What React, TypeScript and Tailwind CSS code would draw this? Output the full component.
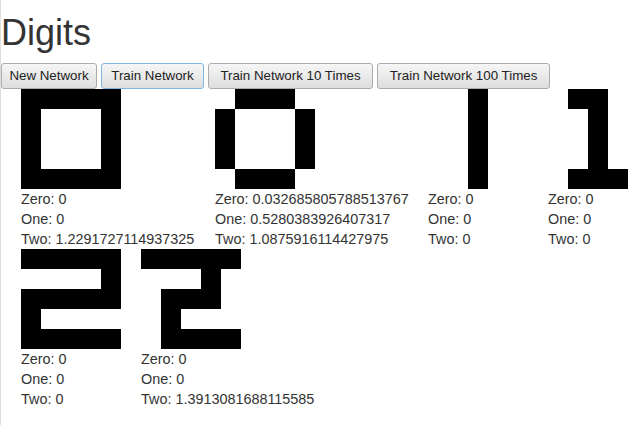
const digits = [
  {
    cells: ['11111', '10001', '10001', '10001', '11111'],
    zero: '0',
    one: '0',
    two: '1.2291727114937325',
    width: 'w-[174px]',
  },
  {
    cells: ['01110', '10001', '10001', '10001', '01110'],
    zero: '0.032685805788513767',
    one: '0.5280383926407317',
    two: '1.0875916114427975',
    width: 'w-[193px]',
  },
  {
    cells: ['00100', '00100', '00100', '00100', '00100'],
    zero: '0',
    one: '0',
    two: '0',
    width: 'w-[100px]',
  },
  {
    cells: ['01100', '00100', '00100', '00100', '01110'],
    zero: '0',
    one: '0',
    two: '0',
    width: 'w-[100px]',
  },
  {
    cells: ['11111', '00001', '11111', '10000', '11111'],
    zero: '0',
    one: '0',
    two: '0',
    width: 'w-[100px]',
  },
  {
    cells: ['11111', '00010', '01110', '01000', '01111'],
    zero: '0',
    one: '0',
    two: '1.3913081688115585',
    width: 'w-[174px]',
  },
];

type Digit = (typeof digits)[number];

function DigitCard({ digit }: { digit: Digit }) {
  return (
    <div className={`${digit.width} shrink-0`}>
      {/* 5x5 pixel picture */}
      <div className="grid grid-cols-5 w-[100px] h-[100px]">
        {digit.cells.join('').split('').map((c, i) => (
          <div key={i} className={c === '1' ? 'bg-black' : 'bg-white'} />
        ))}
      </div>
      <div className="text-[14.4px] leading-5 text-[#333] whitespace-nowrap">
        <div>Zero: {digit.zero}</div>
        <div>One: {digit.one}</div>
        <div>Two: {digit.two}</div>
      </div>
    </div>
  );
}

const buttons = [
  { label: 'New Network', width: 'w-[96px]', focused: false },
  { label: 'Train Network', width: 'w-[103px]', focused: true },
  { label: 'Train Network 10 Times', width: 'w-[165px]', focused: false },
  { label: 'Train Network 100 Times', width: 'w-[173px]', focused: false },
];

function App() {
  return (
    <div className="min-h-screen w-full overflow-hidden bg-white border-l border-[#dedede] font-['Liberation_Sans',Arial,sans-serif] text-[#333]">
      <h1 className="text-[36px] leading-[40px] mt-[13px] mb-[10px] font-normal">Digits</h1>

      {/* Controls */}
      <div className="flex gap-1">
        {buttons.map((b) => (
          <button
            key={b.label}
            className={`${b.width} h-[26px] shrink-0 rounded-[3px] border text-[13.33px] text-[#222] bg-gradient-to-b from-[#f6f6f6] to-[#dedede] ${
              b.focused ? 'border-[#7eb4ea]' : 'border-[#acacac]'
            }`}
          >
            {b.label}
          </button>
        ))}
      </div>

      {/* Digits */}
      <div className="flex gap-5 pl-5 w-[700px]">
        {digits.slice(0, 4).map((d, i) => (
          <DigitCard key={i} digit={d} />
        ))}
      </div>
      <div className="flex gap-5 pl-5">
        {digits.slice(4).map((d, i) => (
          <DigitCard key={i} digit={d} />
        ))}
      </div>
    </div>
  );
}

export default App;
